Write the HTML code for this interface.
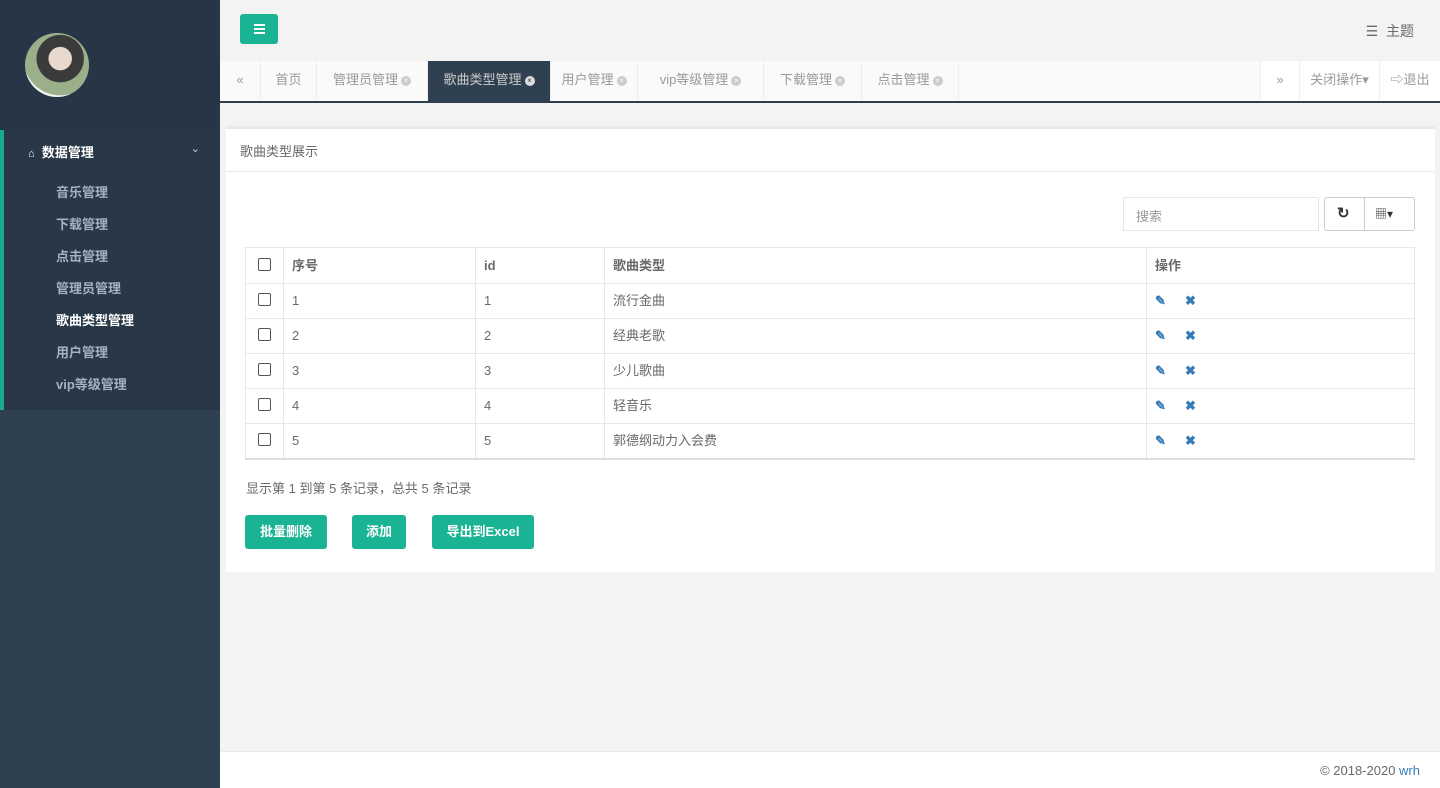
<!DOCTYPE html>
<html><head><meta charset="utf-8"><style>
*{margin:0;padding:0;box-sizing:border-box}
body{width:1440px;height:788px;overflow:hidden;background:#f3f3f4;font-family:"Liberation Sans","Noto Sans CJK SC",sans-serif;font-size:13px;color:#676a6c;position:relative}
.side{position:absolute;left:0;top:0;width:220px;height:788px;background:#2f4050}
.sidetop{position:absolute;left:0;top:0;width:220px;height:410px;background:#263646}
.avatar{position:absolute;left:25px;top:33px;width:64px;height:64px;border-radius:50%;background:radial-gradient(circle at 55% 40%,#e9d9cc 0 22%,#3b3b3b 23% 45%,#9bb08a 46% 70%,#f3f3f3 71%)}
.menu{position:absolute;left:0;top:130px;width:220px;height:280px;border-left:4px solid #19aa8d;background:#293846}
.menu .h{position:absolute;left:24px;top:12px;color:#fff;font-weight:bold;font-size:13px}
.menu .ar{position:absolute;right:20px;top:12px;color:#ccc;font-size:11px}
.menu .it{position:absolute;left:52px;color:#a7b1c2;font-weight:bold;font-size:13px}
.top{position:absolute;left:220px;top:0;right:0;height:61px}
.mbtn{position:absolute;left:20px;top:14px;width:38px;height:30px;background:#1ab394;border-radius:3px}
.mbtn i{position:absolute;left:14px;width:11px;height:2px;background:#fff}
.theme{position:absolute;right:26px;top:21px;color:#676a6c;font-size:14px}
.tabs{position:absolute;left:220px;top:61px;right:0;height:42px;background:#fafafa;border-bottom:2px solid #2f4050}
.tab{position:absolute;top:0;height:40px;line-height:38px;border-right:1px solid #eee;color:#999;font-size:13px;text-align:center}
.x{display:inline-block;width:10px;height:10px;border-radius:50%;background:#ccc;color:#fff;font-size:8px;line-height:10px;vertical-align:middle;margin-left:3px}
.panel{position:absolute;left:226px;top:126px;width:1209px;height:446px;background:#fff;border-top:3px solid #e7eaec}
.ph{height:43px;border-bottom:1px solid #e7eaec;padding:12px 14px;font-size:13px}
.search{position:absolute;left:897px;top:68px;width:196px;height:34px;border:1px solid #e5e6e7;padding:8px 12px;color:#999}
.bgrp{position:absolute;left:1098px;top:68px;width:91px;height:34px;border:1px solid #ccc;border-radius:3px}
table{position:absolute;left:19px;top:118px;width:1170px;border-collapse:collapse;border:1px solid #ddd;border-bottom:2px solid #ddd}
td,th{border:1px solid #e7e7e7;height:35px;padding:0 8px;text-align:left;font-size:13px;line-height:30px}
th{height:36px;font-weight:bold}
.cb{display:inline-block;width:13px;height:13px;border:1px solid #555;border-radius:2px;vertical-align:middle;margin-left:4px;margin-top:-4px}
.btn{position:absolute;top:386px;height:34px;line-height:34px;background:#1ab394;color:#fff;font-weight:bold;font-size:13px;border-radius:3px;text-align:center}
.foot{position:absolute;left:220px;top:751px;right:0;height:37px;background:#fff;border-top:1px solid #e7eaec;text-align:right;padding:11px 20px;font-size:13px}
.ico{color:#337ab7;font-weight:bold;word-spacing:0}
.ico b{display:inline-block;width:30px}
</style></head><body>
<div class="side"><div class="sidetop"></div><div class="avatar"></div>
<div class="menu"><span class="h"><span style="font-size:11px">&#8962;</span>&nbsp; 数据管理</span><span class="ar">&#8964;</span>
<span class="it" style="top:52px">音乐管理</span><span class="it" style="top:84px">下载管理</span><span class="it" style="top:116px">点击管理</span><span class="it" style="top:148px">管理员管理</span><span class="it" style="top:180px;color:#fff">歌曲类型管理</span><span class="it" style="top:212px">用户管理</span><span class="it" style="top:244px">vip等级管理</span></div></div>
<div class="top"><div class="mbtn"><i style="top:10px"></i><i style="top:14px"></i><i style="top:18px"></i></div><div class="theme">☰ &nbsp;主题</div></div>
<div class="tabs">
<div class="tab" style="left:0;width:41px">«</div>
<div class="tab" style="left:41px;width:56px">首页</div>
<div class="tab" style="left:97px;width:111px">管理员管理<span class="x">×</span></div>
<div class="tab" style="left:208px;width:123px;background:#2f4050;color:#ccc">歌曲类型管理<span class="x" style="background:#ddd;color:#2f4050">×</span></div>
<div class="tab" style="left:331px;width:87px">用户管理<span class="x">×</span></div>
<div class="tab" style="left:418px;width:126px">vip等级管理<span class="x">×</span></div>
<div class="tab" style="left:544px;width:98px">下载管理<span class="x">×</span></div>
<div class="tab" style="left:642px;width:97px">点击管理<span class="x">×</span></div>
<div class="tab" style="left:1040px;width:40px;border-left:1px solid #eee;background:#fff">»</div>
<div class="tab" style="left:1080px;width:80px;background:#fff">关闭操作▾</div>
<div class="tab" style="left:1160px;width:60px;background:#fff;border:none">⇨退出</div>
</div>
<div class="panel"><div class="ph">歌曲类型展示</div>
<div class="search">搜索</div>
<div class="bgrp"><span style="position:absolute;left:12px;top:6px;font-weight:bold;color:#333;font-size:15px">↻</span><span style="position:absolute;left:39px;top:0;height:32px;border-left:1px solid #ccc"></span><span style="position:absolute;left:50px;top:7px;color:#333;font-size:12px">▦▾</span></div>
<table>
<tr><th style="width:38px"><span class="cb"></span></th><th style="width:192px">序号</th><th style="width:129px">id</th><th style="width:542px">歌曲类型</th><th>操作</th></tr>
<tr><td><span class="cb"></span></td><td>1</td><td>1</td><td>流行金曲</td><td><span class="ico"><b>✎</b>✖</span></td></tr>
<tr><td><span class="cb"></span></td><td>2</td><td>2</td><td>经典老歌</td><td><span class="ico"><b>✎</b>✖</span></td></tr>
<tr><td><span class="cb"></span></td><td>3</td><td>3</td><td>少儿歌曲</td><td><span class="ico"><b>✎</b>✖</span></td></tr>
<tr><td><span class="cb"></span></td><td>4</td><td>4</td><td>轻音乐</td><td><span class="ico"><b>✎</b>✖</span></td></tr>
<tr><td><span class="cb"></span></td><td>5</td><td>5</td><td>郭德纲动力入会费</td><td><span class="ico"><b>✎</b>✖</span></td></tr>
</table>
<div style="position:absolute;left:20px;top:349px">显示第 1 到第 5 条记录，总共 5 条记录</div>
<div class="btn" style="left:19px;width:82px">批量删除</div>
<div class="btn" style="left:126px;width:54px">添加</div>
<div class="btn" style="left:206px;width:102px">导出到Excel</div>
</div>
<div class="foot">© 2018-2020 <span style="color:#337ab7">wrh</span></div>
</body></html>
